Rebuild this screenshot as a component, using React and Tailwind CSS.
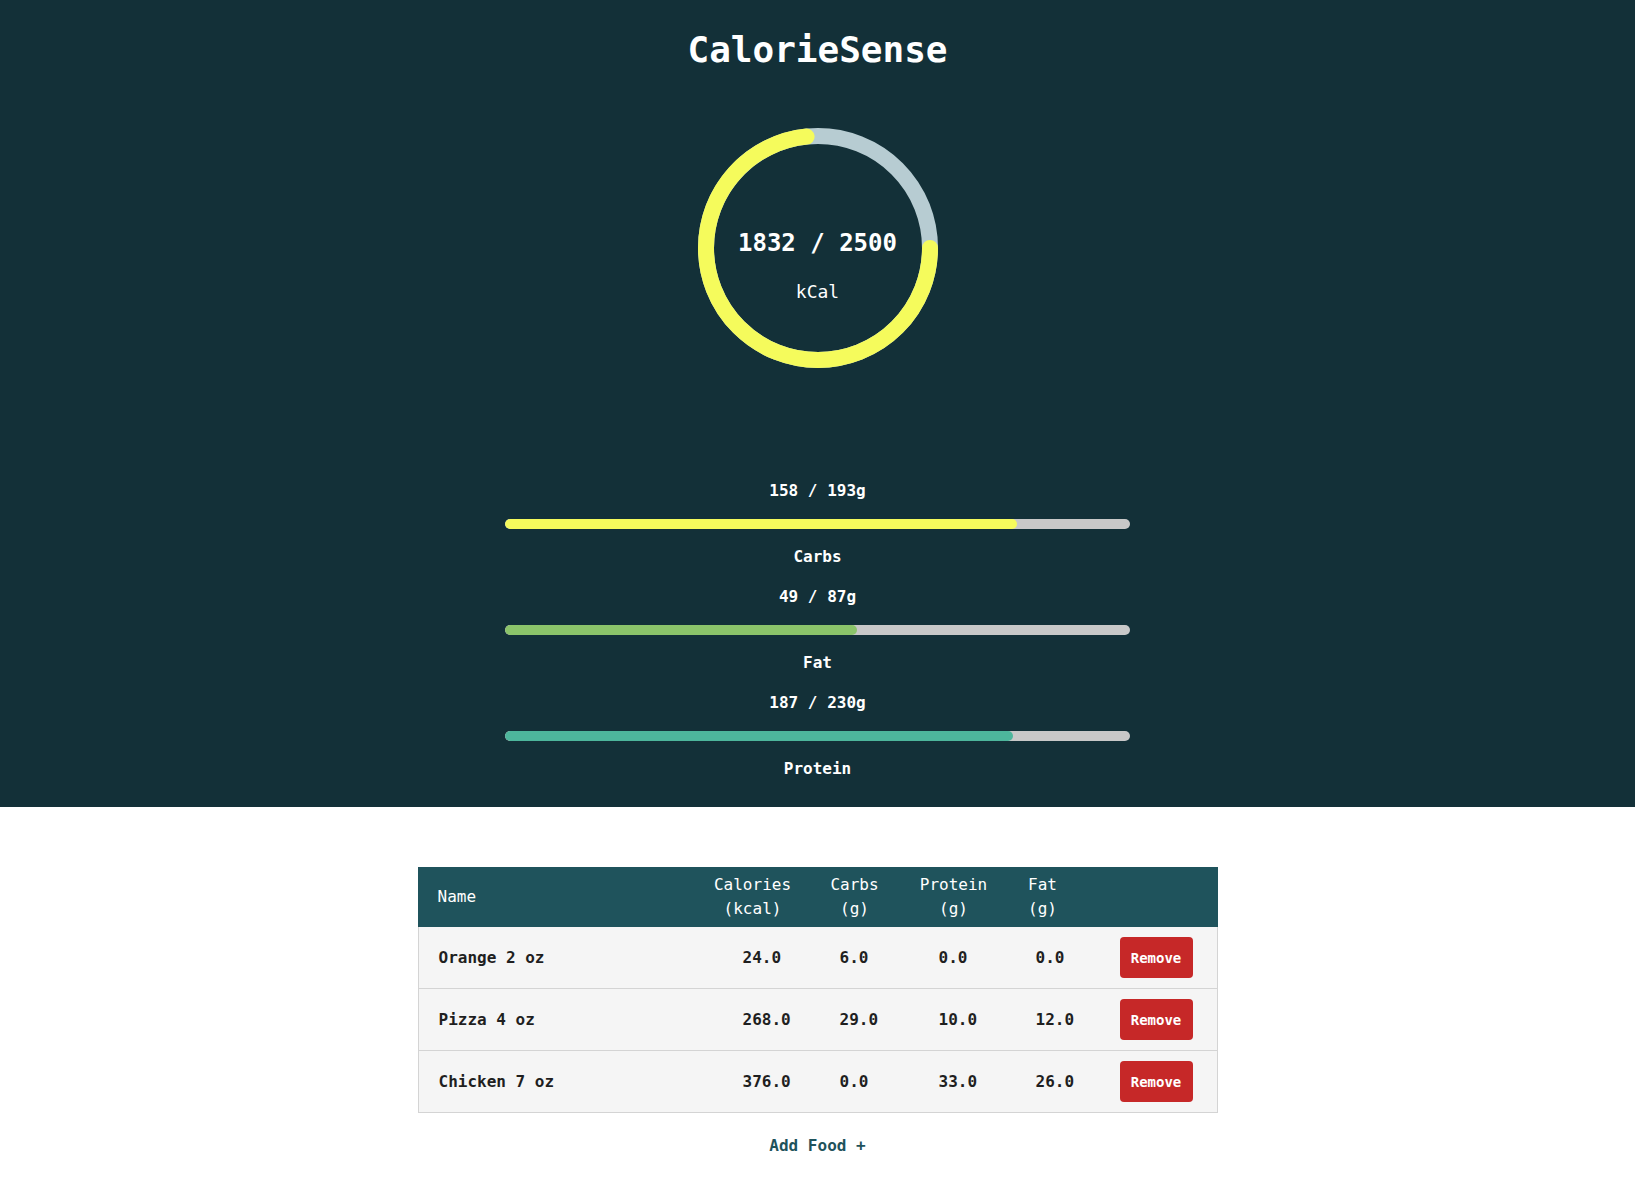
import React from 'react';

const foods = [
  { id: 1, name: 'Orange 2 oz', calories: '24.0', carbs: '6.0', protein: '0.0', fat: '0.0' },
  { id: 2, name: 'Pizza 4 oz', calories: '268.0', carbs: '29.0', protein: '10.0', fat: '12.0' },
  { id: 3, name: 'Chicken 7 oz', calories: '376.0', carbs: '0.0', protein: '33.0', fat: '26.0' },
];

const macros = [
  { label: 'Carbs', value: 158, goal: 193, bar: 'bg-[#f5fb5c]' },
  { label: 'Fat', value: 49, goal: 87, bar: 'bg-[#8bc46a]' },
  { label: 'Protein', value: 187, goal: 230, bar: 'bg-[#4db69c]' },
];

function CalorieRing({ eaten, goal }) {
  const r = 112;
  const circ = 2 * Math.PI * r;
  const pct = Math.min(eaten / goal, 1);

  return (
    <div className="relative w-[240px] h-[240px]">
      <svg width="240" height="240" viewBox="0 0 240 240">
        <circle cx="120" cy="120" r={r} fill="none" stroke="#b7ccd2" strokeWidth="16" />
        <circle
          cx="120"
          cy="120"
          r={r}
          fill="none"
          stroke="#f5fb5c"
          strokeWidth="16"
          strokeLinecap="round"
          strokeDasharray={`${circ * pct} ${circ}`}
        />
      </svg>
      <div className="absolute inset-0 flex flex-col items-center pt-[99px]">
        <span className="text-[24px] leading-[32px] font-bold">
          {eaten} / {goal}
        </span>
        <span className="text-[18px] leading-[28px] mt-[19px]">kCal</span>
      </div>
    </div>
  );
}

function MacroBar({ label, value, goal, bar }) {
  return (
    <div className="flex flex-col items-center w-[625px]">
      <span className="text-base leading-6 font-bold">
        {value} / {goal}g
      </span>
      <div className="w-full h-[10px] mt-[16px] rounded-full bg-[#c8c8c8] overflow-hidden">
        <div className={`h-full rounded-full ${bar}`} style={{ width: `${(value / goal) * 100}%` }} />
      </div>
      <span className="text-base leading-6 font-bold mt-[16px]">{label}</span>
    </div>
  );
}

export default function App() {
  return (
    <div className="min-h-[1192px] bg-white font-['DejaVu_Sans_Mono',monospace]">
      <div className="bg-[#133038] text-white flex flex-col items-center pt-[30px] pb-[26px]">
        <h1 className="text-4xl leading-10 font-bold">CalorieSense</h1>
        <div className="mt-[58px]">
          <CalorieRing eaten={1832} goal={2500} />
        </div>
        <div className="mt-[111px] flex flex-col gap-[16px]">
          {macros.map(m => (
            <MacroBar key={m.label} {...m} />
          ))}
        </div>
      </div>

      <div className="flex flex-col items-center pt-[60px]">
        <div className="w-[800px]">
          <div className="flex items-center h-[60px] bg-[#1f535c] text-white text-base leading-6">
            <div className="w-[284px] pl-[20px]">Name</div>
            <div className="w-[102px] text-center">Calories<br />(kcal)</div>
            <div className="w-[102px] text-center">Carbs<br />(g)</div>
            <div className="w-[96px] text-center">Protein<br />(g)</div>
            <div className="w-[82px] text-center">Fat<br />(g)</div>
            <div className="flex-1" />
          </div>
          {foods.map(food => (
            <div
              key={food.id}
              className="flex items-center h-[62px] bg-[#f5f5f5] border-x border-b border-[#d4d4d4] text-[#1f1f1f] text-base font-bold"
            >
              <div className="w-[283px] pl-[20px]">{food.name}</div>
              <div className="w-[102px] pl-[41px]">{food.calories}</div>
              <div className="w-[102px] pl-[36px]">{food.carbs}</div>
              <div className="w-[96px] pl-[33px]">{food.protein}</div>
              <div className="w-[82px] pl-[34px]">{food.fat}</div>
              <div className="flex-1 flex justify-end pr-[24px]">
                <button className="w-[73px] h-[41px] rounded bg-[#c62828] text-white text-sm font-bold">
                  Remove
                </button>
              </div>
            </div>
          ))}
        </div>
        <button className="mt-[21px] text-base leading-6 font-bold text-[#1f535c]">Add Food +</button>
      </div>
    </div>
  );
}
